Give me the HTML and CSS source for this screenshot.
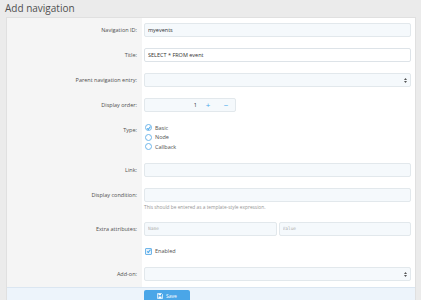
FILE: index.html
```html
<!DOCTYPE html>
<html>
<head>
    <title>Add navigation</title>
    <link rel="stylesheet" href="styles.css">
</head>
<body>
    <h1>Add navigation</h1>

    <form class="block">
        <dl class="row">
            <dt>Navigation ID:</dt>
            <dd><input class="input" type="text" value="myevents"></dd>
        </dl>
        <dl class="row">
            <dt>Title:</dt>
            <dd><input class="input is-focused" type="text" value="SELECT * FROM event"></dd>
        </dl>
        <dl class="row">
            <dt>Parent navigation entry:</dt>
            <dd>
                <div class="input select">
                    <svg class="select-arrows" width="3" height="5" viewBox="0 0 6 10">
                        <path d="M3 0L6 4H0z M3 10L6 6H0z" fill="#555"/>
                    </svg>
                </div>
            </dd>
        </dl>
        <dl class="row">
            <dt>Display order:</dt>
            <dd>
                <div class="input spinner">
                    <span class="spinner-value">1</span>
                    <span class="spinner-btn">+</span>
                    <span class="spinner-btn">&minus;</span>
                </div>
            </dd>
        </dl>
        <dl class="row">
            <dt>Type:</dt>
            <dd class="choices">
                <label class="choice"><span class="radio is-checked"></span>Basic</label>
                <label class="choice"><span class="radio"></span>Node</label>
                <label class="choice"><span class="radio"></span>Callback</label>
            </dd>
        </dl>
        <dl class="row">
            <dt>Link:</dt>
            <dd><input class="input" type="text"></dd>
        </dl>
        <dl class="row">
            <dt>Display condition:</dt>
            <dd>
                <input class="input" type="text">
                <div class="hint">This should be entered as a template-style expression.</div>
            </dd>
        </dl>
        <dl class="row">
            <dt>Extra attributes:</dt>
            <dd class="pair">
                <input class="input code" type="text" placeholder="Name">
                <input class="input code" type="text" placeholder="Value">
            </dd>
        </dl>
        <dl class="row">
            <dt></dt>
            <dd><label class="choice"><span class="checkbox"></span>Enabled</label></dd>
        </dl>
        <dl class="row">
            <dt>Add-on:</dt>
            <dd>
                <div class="input select">
                    <svg class="select-arrows" width="3" height="5" viewBox="0 0 6 10">
                        <path d="M3 0L6 4H0z M3 10L6 6H0z" fill="#555"/>
                    </svg>
                </div>
            </dd>
        </dl>

        <div class="footer">
            <button type="button" class="button">
                <svg width="6" height="6" viewBox="0 0 12 12">
                    <path d="M1 1h8l2 2v8H1z" fill="none" stroke="#fff" stroke-width="1.4"/>
                    <rect x="3" y="1.5" width="5" height="3" fill="#fff"/>
                    <rect x="3" y="7" width="6" height="3.5" fill="#fff"/>
                </svg>
                Save
            </button>
        </div>
    </form>
</body>
</html>
```

FILE: styles.css
```css
body {
    background-color: #ebebeb;
    font-family: "Open Sans", "Noto Sans", sans-serif;
    color: #505050;
    margin: 0;
    padding: 0;
}

h1 {
    margin: 0;
    padding: 1px 5px 0;
    height: 16px;
    font-size: 10px;
    line-height: 15px;
    font-weight: normal;
    color: #505050;
}

.block {
    margin: 0 5px 0 6px;
    background-color: #ffffff;
    border: 1px solid #e0e0e0;
    border-bottom: none;
}

.row {
    display: grid;
    grid-template-columns: 135px 1fr;
    margin: 0;
}

.row dt {
    background-color: #f5f5f5;
    padding: 5px 5px 6px 0;
    text-align: right;
    font-size: 5.5px;
    line-height: 14px;
    color: #505050;
}

.row dd {
    margin: 0;
    padding: 5px 4px 6px 2px;
}

.input {
    display: block;
    width: 100%;
    height: 14px;
    box-sizing: border-box;
    margin: 0;
    padding: 0 3px;
    border: 1px solid #e2e8ec;
    border-radius: 2px;
    background-color: #f5f9fc;
    font-family: inherit;
    font-size: 5.5px;
    color: #333;
    outline: none;
}

.input.is-focused {
    background-color: #ffffff;
    border-color: #dde3e8;
}

.input::placeholder {
    color: #b0b0b0;
}

.code {
    font-family: "DejaVu Sans Mono", monospace;
    font-size: 4.5px;
}

.select {
    position: relative;
}

.select-arrows {
    position: absolute;
    right: 3px;
    top: 4px;
}

.spinner {
    display: flex;
    align-items: center;
    width: 92px;
    padding: 0;
}

.spinner-value {
    flex: 1;
    text-align: right;
    padding-right: 2px;
    font-size: 5.5px;
}

.spinner-btn {
    width: 18px;
    text-align: center;
    color: #47a7eb;
    font-size: 8px;
    line-height: 12px;
}

.choices {
    display: flex;
    flex-direction: column;
}

.choice {
    display: flex;
    align-items: center;
    height: 9.5px;
    font-size: 5.5px;
    color: #505050;
}

.radio,
.checkbox {
    width: 5px;
    height: 5px;
    margin: 0 3px 0 1px;
    border: 1px solid #6fb6ea;
    border-radius: 50%;
    background-color: #ffffff;
    position: relative;
}

.radio.is-checked::after,
.checkbox::after {
    content: "";
    position: absolute;
    left: 1.5px;
    top: 0.5px;
    width: 1.2px;
    height: 2.5px;
    border-right: 1px solid #47a7eb;
    border-bottom: 1px solid #47a7eb;
    transform: rotate(40deg);
}

.checkbox {
    border-radius: 1px;
    background-color: #e6f1fb;
}

.hint {
    margin-top: 2px;
    font-size: 4.8px;
    line-height: 7px;
    color: #959595;
}

.pair {
    display: flex;
    gap: 2px;
}

.footer {
    background-color: #edf4fb;
    border-top: 1px solid #dbe6f1;
    padding: 2px 0 1px 137px;
}

.button {
    display: flex;
    align-items: center;
    justify-content: center;
    gap: 3px;
    width: 46px;
    height: 12px;
    padding: 0;
    border: none;
    border-radius: 2px;
    background-color: #4aa6e8;
    color: #ffffff;
    font-family: inherit;
    font-size: 5px;
    cursor: pointer;
}
```
